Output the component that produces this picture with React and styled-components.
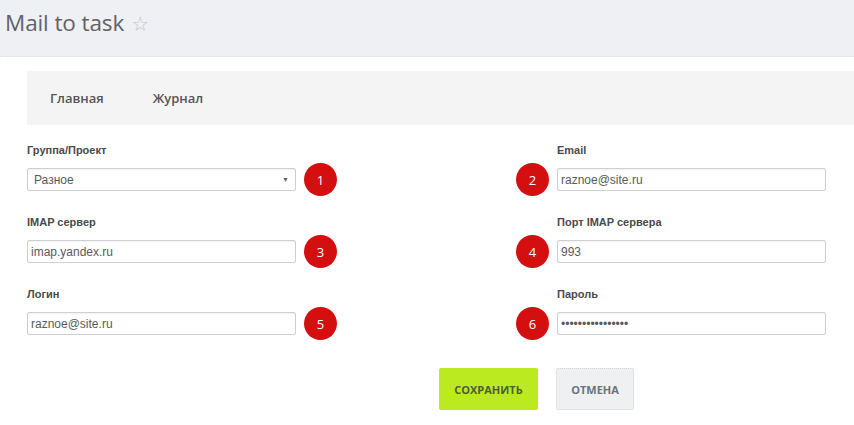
import React from "react";
import styled, { createGlobalStyle } from "styled-components";

const GlobalStyle = createGlobalStyle`
  html, body {
    margin: 0;
    padding: 0;
    background: #fff;
  }
  body {
    font-family: "Liberation Sans", Arial, sans-serif;
  }
`;

const Page = styled.div`
  width: 854px;
  height: 425px;
  overflow: hidden;
`;

const TitleBar = styled.header`
  height: 57px;
  background: #eef0f3;
  border-bottom: 1px dotted #e2e4e8;
  box-sizing: border-box;
  display: flex;
  align-items: flex-start;
  padding: 9px 0 0 5px;
`;

const Title = styled.h1`
  margin: 0;
  font-family: "Open Sans", sans-serif;
  font-weight: 400;
  font-size: 22.5px;
  line-height: 28px;
  color: #5f6266;
  letter-spacing: -0.1px;
`;

const Star = styled.span`
  margin-left: 7px;
  color: #c4c6c9;
  font-size: 20px;
  font-family: "DejaVu Sans", sans-serif;
`;

const Content = styled.main`
  padding: 14px 0 0 27px;
`;

const Nav = styled.nav`
  height: 54px;
  background: #f4f4f4;
  display: flex;
  align-items: center;
  gap: 49px;
  padding-left: 23px;
`;

const NavItem = styled.a`
  font-family: "Open Sans", sans-serif;
  font-weight: 600;
  font-size: 13px;
  color: #555;
  text-decoration: none;
`;

const Form = styled.form`
  padding: 19px 28px 0 0;
`;

const Row = styled.div`
  display: flex;
  justify-content: space-between;
  align-items: flex-start;
  height: 72px;
`;

const Side = styled.div`
  display: flex;
  align-items: flex-end;
  gap: 8px;
  flex-direction: ${(p) => (p.$right ? "row-reverse" : "row")};
`;

const Field = styled.div`
  display: flex;
  flex-direction: column;
  width: 269px;
`;

const Label = styled.label`
  font-size: 11px;
  font-weight: 700;
  color: #4a4a4a;
  height: 13px;
  line-height: 13px;
  margin-bottom: 11px;
`;

const Input = styled.input`
  box-sizing: border-box;
  width: 100%;
  height: 23px;
  border: 1px solid #cfcfcf;
  border-radius: 2px;
  box-shadow: inset 0 1px 2px rgba(0, 0, 0, 0.06);
  padding: 0 3px;
  font-family: "Liberation Sans", Arial, sans-serif;
  font-size: 12px;
  color: #5a5a5a;
  outline: none;
`;

const Select = styled.div`
  box-sizing: border-box;
  width: 100%;
  height: 23px;
  border: 1px solid #cfcfcf;
  border-radius: 2px;
  box-shadow: inset 0 1px 2px rgba(0, 0, 0, 0.06);
  padding: 0 6px;
  display: flex;
  align-items: center;
  justify-content: space-between;
  font-size: 12px;
  color: #5a5a5a;

  span:last-child {
    font-size: 7px;
    color: #666;
  }
`;

const Badge = styled.div`
  width: 33px;
  height: 33px;
  border-radius: 50%;
  background: #d40f0f;
  color: #fff;
  font-family: "Open Sans", sans-serif;
  font-size: 13px;
  display: flex;
  align-items: center;
  justify-content: center;
  flex-shrink: 0;
  margin-bottom: -5px;
`;

const Buttons = styled.div`
  display: flex;
  gap: 18px;
  padding: 0 0 0 412px;
  margin-top: 8px;
`;

const Button = styled.button`
  height: 42px;
  width: ${(p) => (p.$primary ? "99px" : "78px")};
  border-radius: 2px;
  border: ${(p) => (p.$primary ? "none" : "1px dotted #d4d6da")};
  background: ${(p) => (p.$primary ? "#bcea21" : "#eef0f2")};
  color: ${(p) => (p.$primary ? "#505a3a" : "#6d717a")};
  font-family: "Open Sans", sans-serif;
  font-weight: 700;
  font-size: 11px;
  padding: 0;
`;

const FormField = ({ label, badge, right, children }) => (
  <Side $right={right}>
    <Field>
      <Label>{label}</Label>
      {children}
    </Field>
    <Badge>{badge}</Badge>
  </Side>
);

const App = () => {
  return (
    <Page>
      <GlobalStyle />
      <TitleBar>
        <Title>
          Mail to task<Star>☆</Star>
        </Title>
      </TitleBar>
      <Content>
        <Nav>
          <NavItem>Главная</NavItem>
          <NavItem>Журнал</NavItem>
        </Nav>
        <Form>
          <Row>
            <FormField label="Группа/Проект" badge="1">
              <Select>
                <span>Разное</span>
                <span>▼</span>
              </Select>
            </FormField>
            <FormField label="Email" badge="2" right>
              <Input defaultValue="raznoe@site.ru" />
            </FormField>
          </Row>
          <Row>
            <FormField label="IMAP сервер" badge="3">
              <Input defaultValue="imap.yandex.ru" />
            </FormField>
            <FormField label="Порт IMAP сервера" badge="4" right>
              <Input defaultValue="993" />
            </FormField>
          </Row>
          <Row>
            <FormField label="Логин" badge="5">
              <Input defaultValue="raznoe@site.ru" />
            </FormField>
            <FormField label="Пароль" badge="6" right>
              <Input type="password" defaultValue="raznoesiteru1234" />
            </FormField>
          </Row>
          <Buttons>
            <Button $primary type="button">СОХРАНИТЬ</Button>
            <Button type="button">ОТМЕНА</Button>
          </Buttons>
        </Form>
      </Content>
    </Page>
  );
};

export default App;
